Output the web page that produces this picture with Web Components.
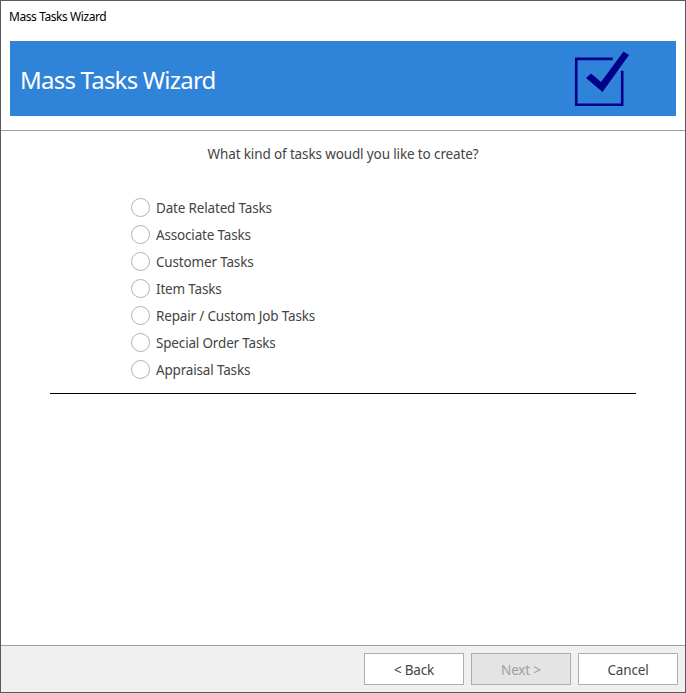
<!DOCTYPE html>
<html>
<head>
<meta charset="utf-8">
<title>Mass Tasks Wizard</title>
<style>
    html, body { margin: 0; padding: 0; background: white; }
    body { font-family: "Noto Sans", "Open Sans", sans-serif; color: #444; }
</style>
</head>
<body>
<wizard-window>
    <span slot="title">Mass Tasks Wizard</span>
    <wizard-banner>Mass Tasks Wizard</wizard-banner>
    <task-picker question="What kind of tasks woudl you like to create?">
        <task-option>Date Related Tasks</task-option>
        <task-option>Associate Tasks</task-option>
        <task-option>Customer Tasks</task-option>
        <task-option>Item Tasks</task-option>
        <task-option>Repair / Custom Job Tasks</task-option>
        <task-option>Special Order Tasks</task-option>
        <task-option>Appraisal Tasks</task-option>
    </task-picker>
    <wizard-button slot="footer">&lt; Back</wizard-button>
    <wizard-button slot="footer" disabled>Next &gt;</wizard-button>
    <wizard-button slot="footer">Cancel</wizard-button>
</wizard-window>

<script>
class WizardWindow extends HTMLElement {
    constructor() {
        super();
        this.attachShadow({mode: "open"}).innerHTML = `
<style>
    :host {
        display: flex;
        flex-direction: column;
        box-sizing: border-box;
        width: 686px;
        height: 693px;
        border: 1px solid #5a5a5a;
        background: white;
    }
    .title {
        height: 40px;
        padding: 8px 0 0 8px;
        box-sizing: border-box;
        font-size: 12px;
        line-height: 16px;
        letter-spacing: -0.42px;
        color: #000;
    }
    main { flex: 1; }
    footer {
        display: flex;
        justify-content: flex-end;
        gap: 7px;
        height: 47px;
        box-sizing: border-box;
        padding: 7px 7px 0 0;
        border-top: 1px solid #a0a0a0;
        background: #f0f0f0;
    }
</style>
<div class="title"><slot name="title"></slot></div>
<main><slot></slot></main>
<footer><slot name="footer"></slot></footer>`;
    }
}

class WizardBanner extends HTMLElement {
    constructor() {
        super();
        this.attachShadow({mode: "open"}).innerHTML = `
<style>
    :host {
        display: block;
        padding-bottom: 14px;
        border-bottom: 1px solid #a0a0a0;
    }
    .blue {
        display: flex;
        align-items: center;
        justify-content: space-between;
        height: 75px;
        margin: 0 9px;
        padding: 0 46px 0 10px;
        background: #2f83d8;
        color: white;
        font-size: 24px;
        letter-spacing: -0.78px;
    }
    .blue span { padding-top: 1px; }
    svg { display: block; }
</style>
<div class="blue">
    <span><slot></slot></span>
    <svg width="56" height="59" viewBox="0 0 56 59">
        <path d="M38.7 9.9H2.25V55.8H48.2V21.7" fill="none" stroke="#00008b" stroke-width="2.6"/>
        <path d="M12 29L17 24.5L27 33L49.5 2.5L55 6L28.5 43Z" fill="#00008b"/>
    </svg>
</div>`;
    }
}

class TaskPicker extends HTMLElement {
    constructor() {
        super();
        this.attachShadow({mode: "open"}).innerHTML = `
<style>
    :host { display: block; }
    .question {
        height: 45px;
        padding-top: 13px;
        box-sizing: border-box;
        text-align: center;
        font-size: 13.5px;
        line-height: 20px;
        letter-spacing: -0.13px;
    }
    .options {
        display: flex;
        flex-direction: column;
        padding: 18px 0 0 81px;
        height: 218px;
        box-sizing: border-box;
        margin: 0 49px;
        border-bottom: 1px solid #000;
    }
</style>
<div class="question"></div>
<div class="options"><slot></slot></div>`;
        this.shadowRoot.querySelector('.question').textContent = this.getAttribute('question');
    }
}

class TaskOption extends HTMLElement {
    constructor() {
        super();
        this.attachShadow({mode: "open"}).innerHTML = `
<style>
    :host {
        display: flex;
        align-items: center;
        gap: 6px;
        height: 27px;
        font-size: 13.5px;
        letter-spacing: -0.17px;
        color: #444;
    }
    .radio {
        width: 19px;
        height: 19px;
        box-sizing: border-box;
        border: 1px solid #b4b4b4;
        border-radius: 50%;
        background: white;
    }
</style>
<span class="radio"></span>
<span><slot></slot></span>`;
    }
}

class WizardButton extends HTMLElement {
    constructor() {
        super();
        this.attachShadow({mode: "open"}).innerHTML = `
<style>
    :host {
        display: flex;
        align-items: center;
        justify-content: center;
        width: 100px;
        height: 32px;
        box-sizing: border-box;
        padding-top: 2px;
        border: 1px solid #adadad;
        background: white;
        font-size: 13.5px;
        letter-spacing: -0.17px;
        color: #444;
    }
    :host([disabled]) {
        background: #e4e4e4;
        color: #a0a0a0;
    }
</style>
<slot></slot>`;
    }
}

window.customElements.define('wizard-window', WizardWindow);
window.customElements.define('wizard-banner', WizardBanner);
window.customElements.define('task-picker', TaskPicker);
window.customElements.define('task-option', TaskOption);
window.customElements.define('wizard-button', WizardButton);
</script>
</body>
</html>
